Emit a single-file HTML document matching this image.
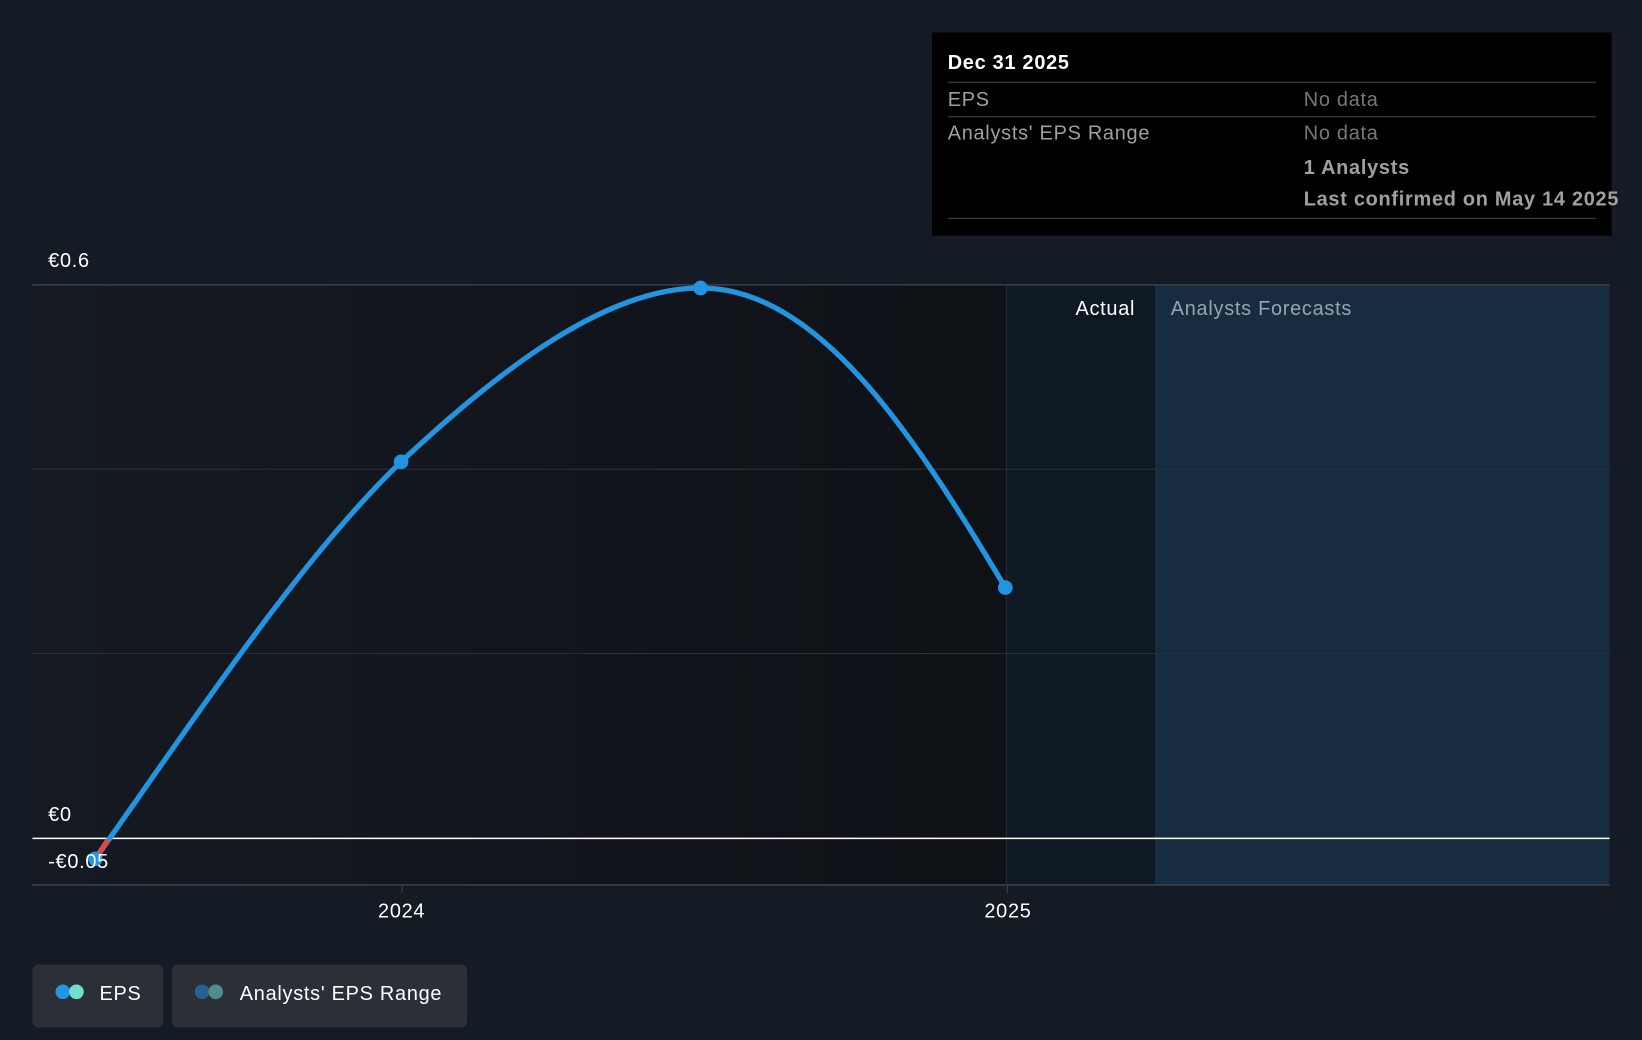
<!DOCTYPE html>
<html><head><meta charset="utf-8"><style>
html,body{margin:0;padding:0;background:#151b24;width:1642px;height:1040px;overflow:hidden}
#w{position:absolute;left:0;top:0;width:1568px;height:993px;transform:scale(1.04719,1.0473);transform-origin:0 0;font-family:"Liberation Sans",sans-serif}
.t{position:absolute;color:#fff;font-size:19px;letter-spacing:0.7px;margin-top:2px;white-space:nowrap}
</style></head><body><div id="w">
<svg width="1568" height="993" style="position:absolute;left:0;top:0">
<defs><linearGradient id="g" x1="0" x2="1"><stop offset="0" stop-color="#151a22"/><stop offset="1" stop-color="#0e1116"/></linearGradient></defs>
<rect x="31" y="272" width="930" height="573" fill="url(#g)"/>
<rect x="961" y="272" width="142" height="573" fill="#0f1924"/>
<rect x="1103" y="272" width="434" height="573" fill="#182c41"/>
<line x1="31" y1="272" x2="1537" y2="272" stroke="#3a4049" stroke-width="1.5"/>
<line x1="31" y1="448" x2="1537" y2="448" stroke="#2a3039"/>
<line x1="31" y1="624" x2="1537" y2="624" stroke="#2a3039"/>
<line x1="961" y1="272" x2="961" y2="845" stroke="#26303b"/>
<line x1="31" y1="845" x2="1537" y2="845" stroke="#3a4049" stroke-width="1.5"/>
<line x1="384" y1="845" x2="384" y2="853" stroke="#3a4049"/>
<line x1="962" y1="845" x2="962" y2="853" stroke="#3a4049"/>
<line x1="31" y1="800.5" x2="1537" y2="800.5" stroke="#fff" stroke-width="1.5"/>
<path d="M91,820 C 190,680 290,530 383,441 C 480,350 580,275 669,275 C 780,275 870,410 960,561" fill="none" stroke="#2394e0" stroke-width="5"/>
<line x1="91" y1="820" x2="103" y2="802" stroke="#e04848" stroke-width="5"/>
<circle cx="91" cy="820" r="7" fill="#2394e0"/>
<circle cx="383" cy="441" r="7" fill="#2394e0"/>
<circle cx="669" cy="275" r="7" fill="#2394e0"/>
<circle cx="960" cy="561" r="7" fill="#2394e0"/>
</svg>
<div class="t" style="left:46px;top:237px">€0.6</div>
<div class="t" style="left:46px;top:766px">€0</div>
<div class="t" style="left:46px;top:811px">-€0.05</div>
<div class="t" style="left:361px;top:858px">2024</div>
<div class="t" style="left:940px;top:858px">2025</div>
<div class="t" style="left:1027px;top:283px">Actual</div>
<div class="t" style="left:1118px;top:283px;color:#9aa3ad">Analysts Forecasts</div>
<div style="position:absolute;left:890px;top:31px;width:649px;height:194px;background:#000">
<div class="t" style="left:15px;top:17px;font-weight:bold">Dec 31 2025</div>
<div style="position:absolute;left:15px;right:15px;top:47px;border-top:1px solid #444"></div>
<div class="t" style="left:15px;top:52px;color:#a0a0a0">EPS</div>
<div class="t" style="left:355px;top:52px;color:#777">No data</div>
<div style="position:absolute;left:15px;right:15px;top:80px;border-top:1px solid #444"></div>
<div class="t" style="left:15px;top:84px;color:#a0a0a0">Analysts' EPS Range</div>
<div class="t" style="left:355px;top:84px;color:#777">No data</div>
<div class="t" style="left:355px;top:117px;color:#a0a0a0;font-weight:bold">1 Analysts</div>
<div class="t" style="left:355px;top:147px;color:#a0a0a0;font-weight:bold">Last confirmed on May 14 2025</div>
<div style="position:absolute;left:15px;right:15px;top:177px;border-top:1px solid #444"></div>
</div>
<div style="position:absolute;left:31px;top:921px;width:125px;height:60px;background:#2b2f37;border-radius:6px">
<span style="position:absolute;left:22px;top:19px;width:14px;height:14px;border-radius:50%;background:#2394e0"></span>
<span style="position:absolute;left:35px;top:19px;width:14px;height:14px;border-radius:50%;background:#6ee0d0"></span>
<div class="t" style="left:64px;top:16px">EPS</div></div>
<div style="position:absolute;left:164px;top:921px;width:282px;height:60px;background:#2b2f37;border-radius:6px">
<span style="position:absolute;left:22px;top:19px;width:14px;height:14px;border-radius:50%;background:#256290"></span>
<span style="position:absolute;left:35px;top:19px;width:14px;height:14px;border-radius:50%;background:#4f8e88"></span>
<div class="t" style="left:65px;top:16px">Analysts' EPS Range</div></div>
</div></body></html>
